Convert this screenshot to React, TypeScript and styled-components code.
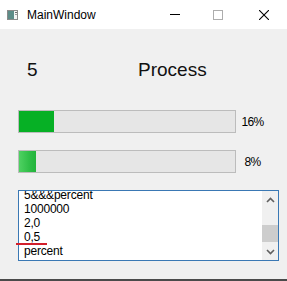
import React from 'react';
import styled, { createGlobalStyle } from 'styled-components';

const GlobalStyle = createGlobalStyle`
  html, body {
    margin: 0;
    padding: 0;
    background: #f0f0f0;
  }
  body {
    font-family: "Liberation Sans", Arial, sans-serif;
  }
`;

const Window = styled.div`
  position: relative;
  width: 287px;
  height: 281px;
  box-sizing: border-box;
  display: flex;
  flex-direction: column;
  background: #f0f0f0;
  border-bottom: 2px solid #4a4a4a;
  overflow: hidden;
`;

const TitleBar = styled.div`
  height: 29px;
  flex: none;
  display: flex;
  align-items: center;
  background: #fff;
`;

const AppIcon = styled.svg`
  margin-left: 7px;
  flex: none;
`;

const Title = styled.span`
  margin-left: 9px;
  font-size: 12px;
  color: #000;
  flex: 1;
`;

const CaptionButton = styled.div<{ $shift?: number }>`
  width: 46px;
  height: 29px;
  display: flex;
  align-items: center;
  justify-content: center;
  padding-left: ${p => p.$shift ?? 0}px;
  box-sizing: border-box;
`;

const Body = styled.div`
  flex: 1;
  display: flex;
  flex-direction: column;
  padding: 30px 0 0 18px;
`;

const HeaderRow = styled.div`
  display: flex;
  height: 22px;
  line-height: 22px;
  font-size: 19px;
  color: #111;
  padding-left: 9px;
`;

const Count = styled.span`
  width: 111px;
`;

const ProgressRow = styled.div<{ $gap: number }>`
  display: flex;
  align-items: center;
  height: 23px;
  margin-top: ${p => p.$gap}px;
`;

const Bar = styled.div`
  width: 218px;
  height: 23px;
  box-sizing: border-box;
  border: 1px solid #bcbcbc;
  background: #e6e6e6;
  display: flex;
`;

const Fill = styled.div<{ $glow?: boolean }>`
  height: 100%;
  background: ${p => (p.$glow ? 'linear-gradient(to right, #4fd162, #2fbe47 60%, #22b43b)' : '#06b025')};
`;

const Percent = styled.span`
  width: 33px;
  text-align: center;
  font-size: 12px;
  letter-spacing: -0.6px;
  color: #000;
`;

const ListBox = styled.div`
  margin-top: 17px;
  width: 261px;
  height: 71px;
  box-sizing: border-box;
  border: 1px solid #3a78b4;
  background: #fff;
  display: flex;
`;

const ListContent = styled.div`
  flex: 1;
  overflow: hidden;
  padding-left: 5px;
`;

const ListItems = styled.div`
  margin-top: -3px;
`;

const Item = styled.div`
  height: 14px;
  line-height: 14px;
  font-size: 12px;
  letter-spacing: -0.2px;
  color: #000;
  white-space: nowrap;
`;

const ScrollBar = styled.div`
  width: 16px;
  display: flex;
  flex-direction: column;
  background: #f0f0f0;
`;

const ScrollArrow = styled.div`
  height: 17px;
  display: flex;
  align-items: center;
  justify-content: center;
`;

const Track = styled.div`
  flex: 1;
`;

const Thumb = styled.div`
  margin-top: 17px;
  height: 17px;
  background: #cdcdcd;
`;

const Marker = styled.div`
  position: absolute;
  left: 16px;
  top: 243px;
  width: 31px;
  height: 2px;
  background: #d2202b;
`;

const Chevron = ({ up }: { up?: boolean }) => (
  <svg width="9" height="6" viewBox="0 0 9 6">
    <path
      d={up ? 'M1 5 L4.5 1.5 L8 5' : 'M1 1 L4.5 4.5 L8 1'}
      fill="none"
      stroke="#606060"
      strokeWidth="1.6"
    />
  </svg>
);

const bars = [
  { value: 16, glow: false },
  { value: 8, glow: true },
];

const items = ['5&&&percent', '1000000', '2,0', '0,5', 'percent'];

export default function App() {
  return (
    <>
      <GlobalStyle />
      <Window>
        <TitleBar>
          <AppIcon width="11" height="10" viewBox="0 0 11 10">
            <rect x="0.5" y="0.5" width="10" height="9" fill="#f4f4f4" stroke="#8a8a8a" />
            <rect x="1" y="1" width="6" height="8" fill="#5d8c88" />
            <rect x="8" y="2" width="2" height="1" fill="#6a6a6a" />
            <rect x="8" y="4" width="2" height="1" fill="#9a9a9a" />
          </AppIcon>
          <Title>MainWindow</Title>
          <CaptionButton $shift={6}>
            <svg width="10" height="1"><rect width="10" height="1" fill="#000" /></svg>
          </CaptionButton>
          <CaptionButton>
            <svg width="10" height="10" viewBox="0 0 10 10">
              <rect x="0.5" y="0.5" width="9" height="9" fill="none" stroke="#adadad" />
            </svg>
          </CaptionButton>
          <CaptionButton>
            <svg width="10" height="10" viewBox="0 0 10 10">
              <path d="M0 0 L10 10 M10 0 L0 10" stroke="#000" strokeWidth="1.1" />
            </svg>
          </CaptionButton>
        </TitleBar>
        <Body>
          <HeaderRow>
            <Count>5</Count>
            <span>Process</span>
          </HeaderRow>
          {bars.map((b, i) => (
            <ProgressRow key={i} $gap={i === 0 ? 29 : 17}>
              <Bar>
                <Fill $glow={b.glow} style={{ width: `${b.value}%` }} />
              </Bar>
              <Percent>{b.value}%</Percent>
            </ProgressRow>
          ))}
          <ListBox>
            <ListContent>
              <ListItems>
                {items.map(t => (
                  <Item key={t}>{t}</Item>
                ))}
              </ListItems>
            </ListContent>
            <ScrollBar>
              <ScrollArrow><Chevron up /></ScrollArrow>
              <Track><Thumb /></Track>
              <ScrollArrow><Chevron /></ScrollArrow>
            </ScrollBar>
          </ListBox>
        </Body>
        <Marker />
      </Window>
    </>
  );
}
